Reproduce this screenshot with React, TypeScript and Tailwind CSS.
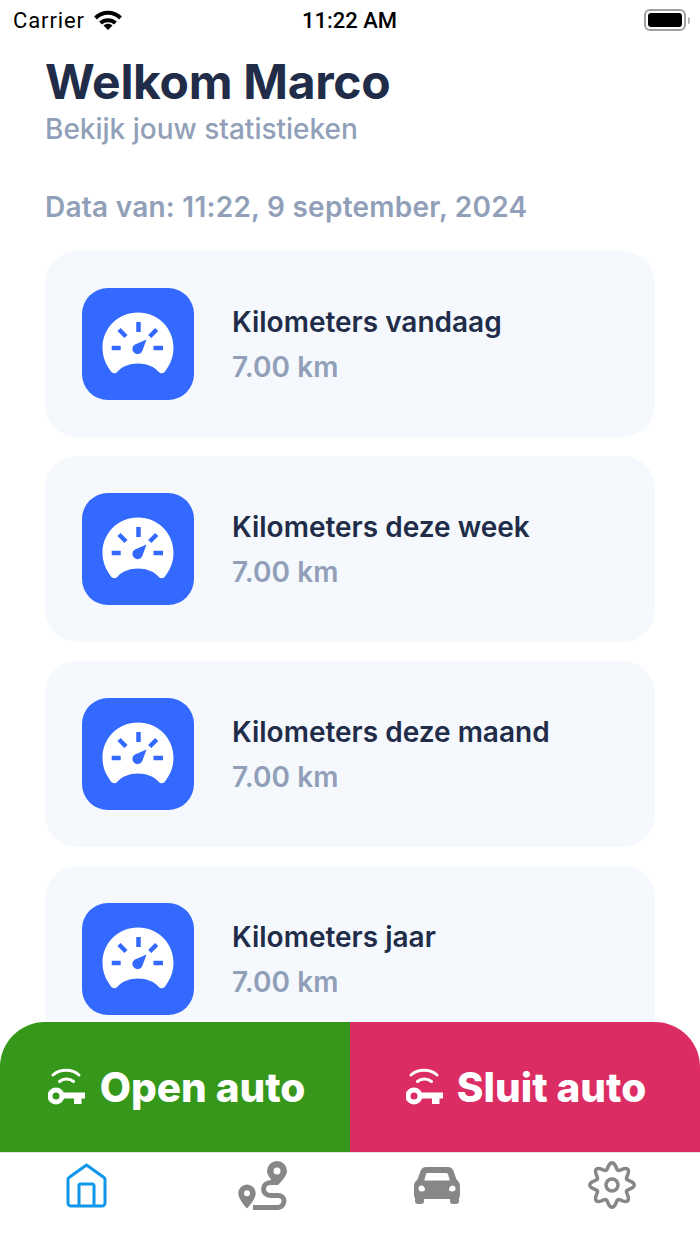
const STATS = ["Kilometers vandaag", "Kilometers deze week", "Kilometers deze maand", "Kilometers jaar"];

// gear outline: wavy circle with 8 lobes
const GEAR_PATH =
  Array.from({ length: 160 }, (_, i) => {
    const a = (i / 160) * Math.PI * 2;
    const r = 19 + 3.2 * Math.cos(8 * a);
    return `${i === 0 ? "M" : "L"}${(24 + r * Math.sin(a)).toFixed(2)} ${(24 - r * Math.cos(a)).toFixed(2)}`;
  }).join("") + "Z";

function GaugeIcon() {
  return (
    <svg width="72" height="64" viewBox="0 0 72 64">
      <path
        d="M36 .5C16 .5.5 16 .5 36c0 7 2 13.500 5.500 19l3 4.500c1.500 2 4.500 2.200 6.200.4C20 54.500 27.500 51.500 36 51.500s16 3 20.800 8.400c1.700 1.800 4.700 1.600 6.200-.4l3-4.500c3.500-5.500 5.500-12 5.500-19C71.500 16 56 .5 36 .5Z"
        fill="#fff"
      />
      <g fill="none" stroke="#3369ff" strokeWidth="4.500">
        <path d="M36.500 10v10" />
        <path d="M17 17.500l7 7" />
        <path d="M54.700 17.500l-7 7" />
        <path d="M9.700 36h9" />
        <path d="M51.500 36h9.500" />
      </g>
      <path d="M44.500 27.500 40.500 38.500a5.200 5.200 0 1 1-8-5.800Z" fill="#3369ff" />
    </svg>
  );
}

function KeyWifiIcon() {
  return (
    <svg width="37" height="38" viewBox="0 0 37 38" fill="none" stroke="#fff" strokeLinecap="round">
      <path d="M5 7C12 .8 24 .8 31 7" strokeWidth="3" />
      <path d="M11.500 13.500c3.800-3.300 10-3.300 14 0" strokeWidth="3" />
      <circle cx="8" cy="28" r="6" strokeWidth="5" />
      <path d="M13 24.500h24v6h-3.500v5.500h-7.500v-5.500H13Z" fill="#fff" stroke="none" />
    </svg>
  );
}

function HomeIcon() {
  return (
    <svg width="41" height="45" viewBox="0 0 41 45" fill="none" stroke="#0e96ea" strokeWidth="3" strokeLinejoin="round">
      <path d="M20.500 2 38 14.500a2 2 0 0 1 1 2V40a3 3 0 0 1-3 3H5a3 3 0 0 1-3-3V16.500a2 2 0 0 1 1-2Z" />
      <path d="M13 43V22.500a1.500 1.500 0 0 1 1.500-1.500h12a1.500 1.500 0 0 1 1.500 1.500V43" />
    </svg>
  );
}

function RouteIcon() {
  return (
    <svg width="50" height="50" viewBox="0 0 50 50">
      <path
        fillRule="evenodd"
        d="M39 0a10 10 0 0 0-10 10c0 4.500 5 10 9 14h2c4-4 9-9.500 9-14A10 10 0 0 0 39 0Zm0 6.500a3.500 3.500 0 1 1 0 7 3.500 3.500 0 0 1 0-7Z"
        fill="#878787"
      />
      <path
        fillRule="evenodd"
        d="M9 23.500a8.700 8.700 0 0 0-8.700 8.700c0 4.800 4.700 11 8.700 15.300 4-4.300 8.700-10.500 8.700-15.300A8.700 8.700 0 0 0 9 23.500Zm0 5.700a3 3 0 1 1 0 6 3 3 0 0 1 0-6Z"
        fill="#878787"
      />
      <path d="M39 21.500h-6c-4.500 0-7.500 3-7.500 6.500s3 6.500 7.500 6.500h7c3.500 0 6 2.500 6 5.500s-2.500 6.500-6 6.500H15" fill="none" stroke="#878787" strokeWidth="5" />
    </svg>
  );
}

function CarIcon() {
  return (
    <svg width="46" height="37" viewBox="0 0 46 37">
      <path
        fillRule="evenodd"
        d="M12 0h22c2.500 0 4.500 1.500 5.500 4l3 8.500c2 1.500 3.500 3.500 3.500 6.500v9c0 1.500-.5 2.500-1 3v3a3 3 0 0 1-3 3h-3a3 3 0 0 1-3-3v-2H10v2a3 3 0 0 1-3 3H4a3 3 0 0 1-3-3v-3c-.5-.5-1-1.500-1-3v-9c0-3 1.500-5 3.500-6.500l3-8.500C7.500 1.500 9.500 0 12 0Zm2 6c-1 0-1.800.5-2.200 1.500l-1.500 6h25.400l-1.500-6C33.800 6.500 33 6 32 6ZM7.500 18.500a3 3 0 0 0 0 6c2.500 0 3.500-.8 3.500-2 0-2.200-1.500-4-3.500-4Zm31 0c-2 0-3.500 1.800-3.500 4 0 1.200 1 2 3.500 2a3 3 0 0 0 0-6Z"
        fill="#878787"
      />
    </svg>
  );
}

function GearIcon() {
  return (
    <svg width="48" height="48" viewBox="0 0 48 48" fill="none" stroke="#878787" strokeWidth="3.500" strokeLinejoin="round">
      <path d={GEAR_PATH} />
      <circle cx="24" cy="24" r="6" />
    </svg>
  );
}

function WifiGlyph() {
  return (
    <svg width="28" height="20" viewBox="0 0 28 20" fill="none" stroke="#000" strokeWidth="4">
      <path d="M1.500 8C8.500 1 19.500 1 26.500 8" />
      <path d="M6.500 13c4.200-3.800 10.800-3.800 15 0" />
      <path d="M14 20 9.500 15.500c2.500-2.200 6.500-2.200 9 0Z" fill="#000" stroke="none" />
    </svg>
  );
}

function StatCard({ title }: { title: string }) {
  return (
    <div className="flex h-[186px] shrink-0 items-center gap-[38px] rounded-[32px] bg-[#f5f9fd] px-[37px]">
      <div className="flex h-28 w-28 items-center justify-center rounded-[26px] bg-[#3369ff]">
        <GaugeIcon />
      </div>
      <div>
        <div className="text-[28px] leading-[36px] font-semibold text-[#212c49]">{title}</div>
        <div className="mt-[9px] text-[28px] leading-[36px] font-semibold tracking-[0.1px] text-[#919fb9]">7.00 km</div>
      </div>
    </div>
  );
}

export default function App() {
  return (
    <div className="flex h-[1244px] w-[700px] flex-col overflow-hidden bg-white font-['Inter',sans-serif]">
      <div className="flex h-10 shrink-0 items-center justify-between pr-[10px] pl-[13px] text-black">
        <div className="flex w-[200px] items-center gap-[9px]">
          <span className="font-['Roboto',sans-serif] text-[22px] tracking-[0.9px]">Carrier</span>
          <WifiGlyph />
        </div>
        <span className="mr-[4px] font-['Roboto',sans-serif] text-[22px] font-medium">11:22 AM</span>
        <div className="flex w-[200px] items-center justify-end gap-[2px]">
          <div className="flex h-[22px] w-[42px] items-center rounded-[6px] border-2 border-[#a0a0a0] p-[2px]">
            <div className="h-full w-full rounded-[3px] bg-black" />
          </div>
          <div className="h-[7px] w-[2px] rounded-r-sm bg-[#b5b5b5]" />
        </div>
      </div>

      <div className="relative flex-1 overflow-hidden">
        <div className="px-[45px] pt-[14px]">
          <h1 className="text-[48px] leading-[56px] font-bold tracking-[-0.3px] text-[#212c49]">Welkom Marco</h1>
          <p className="pt-[1px] text-[28px] leading-[36px] font-medium text-[#919fb9]">Bekijk jouw statistieken</p>
          <p className="mt-[42px] text-[28px] leading-[36px] font-semibold tracking-[0.25px] text-[#919fb9]">Data van: 11:22, 9 september, 2024</p>
          <div className="mt-[26px] flex flex-col gap-[19px]">
            {STATS.map((s) => (
              <StatCard key={s} title={s} />
            ))}
          </div>
        </div>

        <div className="absolute inset-x-0 bottom-0 flex h-[130px] overflow-hidden rounded-t-[45px]">
          <div className="flex w-[350px] shrink-0 items-center justify-center gap-[15px] bg-[#36981b] pl-[3px] text-[40.5px] font-extrabold text-white">
            <KeyWifiIcon />
            <span className="pt-[2px]">Open auto</span>
          </div>
          <div className="flex w-[350px] shrink-0 items-center justify-center gap-[14px] bg-[#db2d63] pl-[2px] text-[40.5px] font-extrabold text-white">
            <KeyWifiIcon />
            <span className="pt-[2px]">Sluit auto</span>
          </div>
        </div>
      </div>

      <div className="grid h-[92px] shrink-0 grid-cols-4 border-t border-[#e2e2e2] pt-[8px]">
        <div className="flex justify-center pt-[2px] pr-[2px]"><HomeIcon /></div>
        <div className="flex justify-center"><RouteIcon /></div>
        <div className="flex justify-center pt-[6px] pr-[2px]"><CarIcon /></div>
        <div className="flex justify-center pr-[2px]"><GearIcon /></div>
      </div>
    </div>
  );
}
